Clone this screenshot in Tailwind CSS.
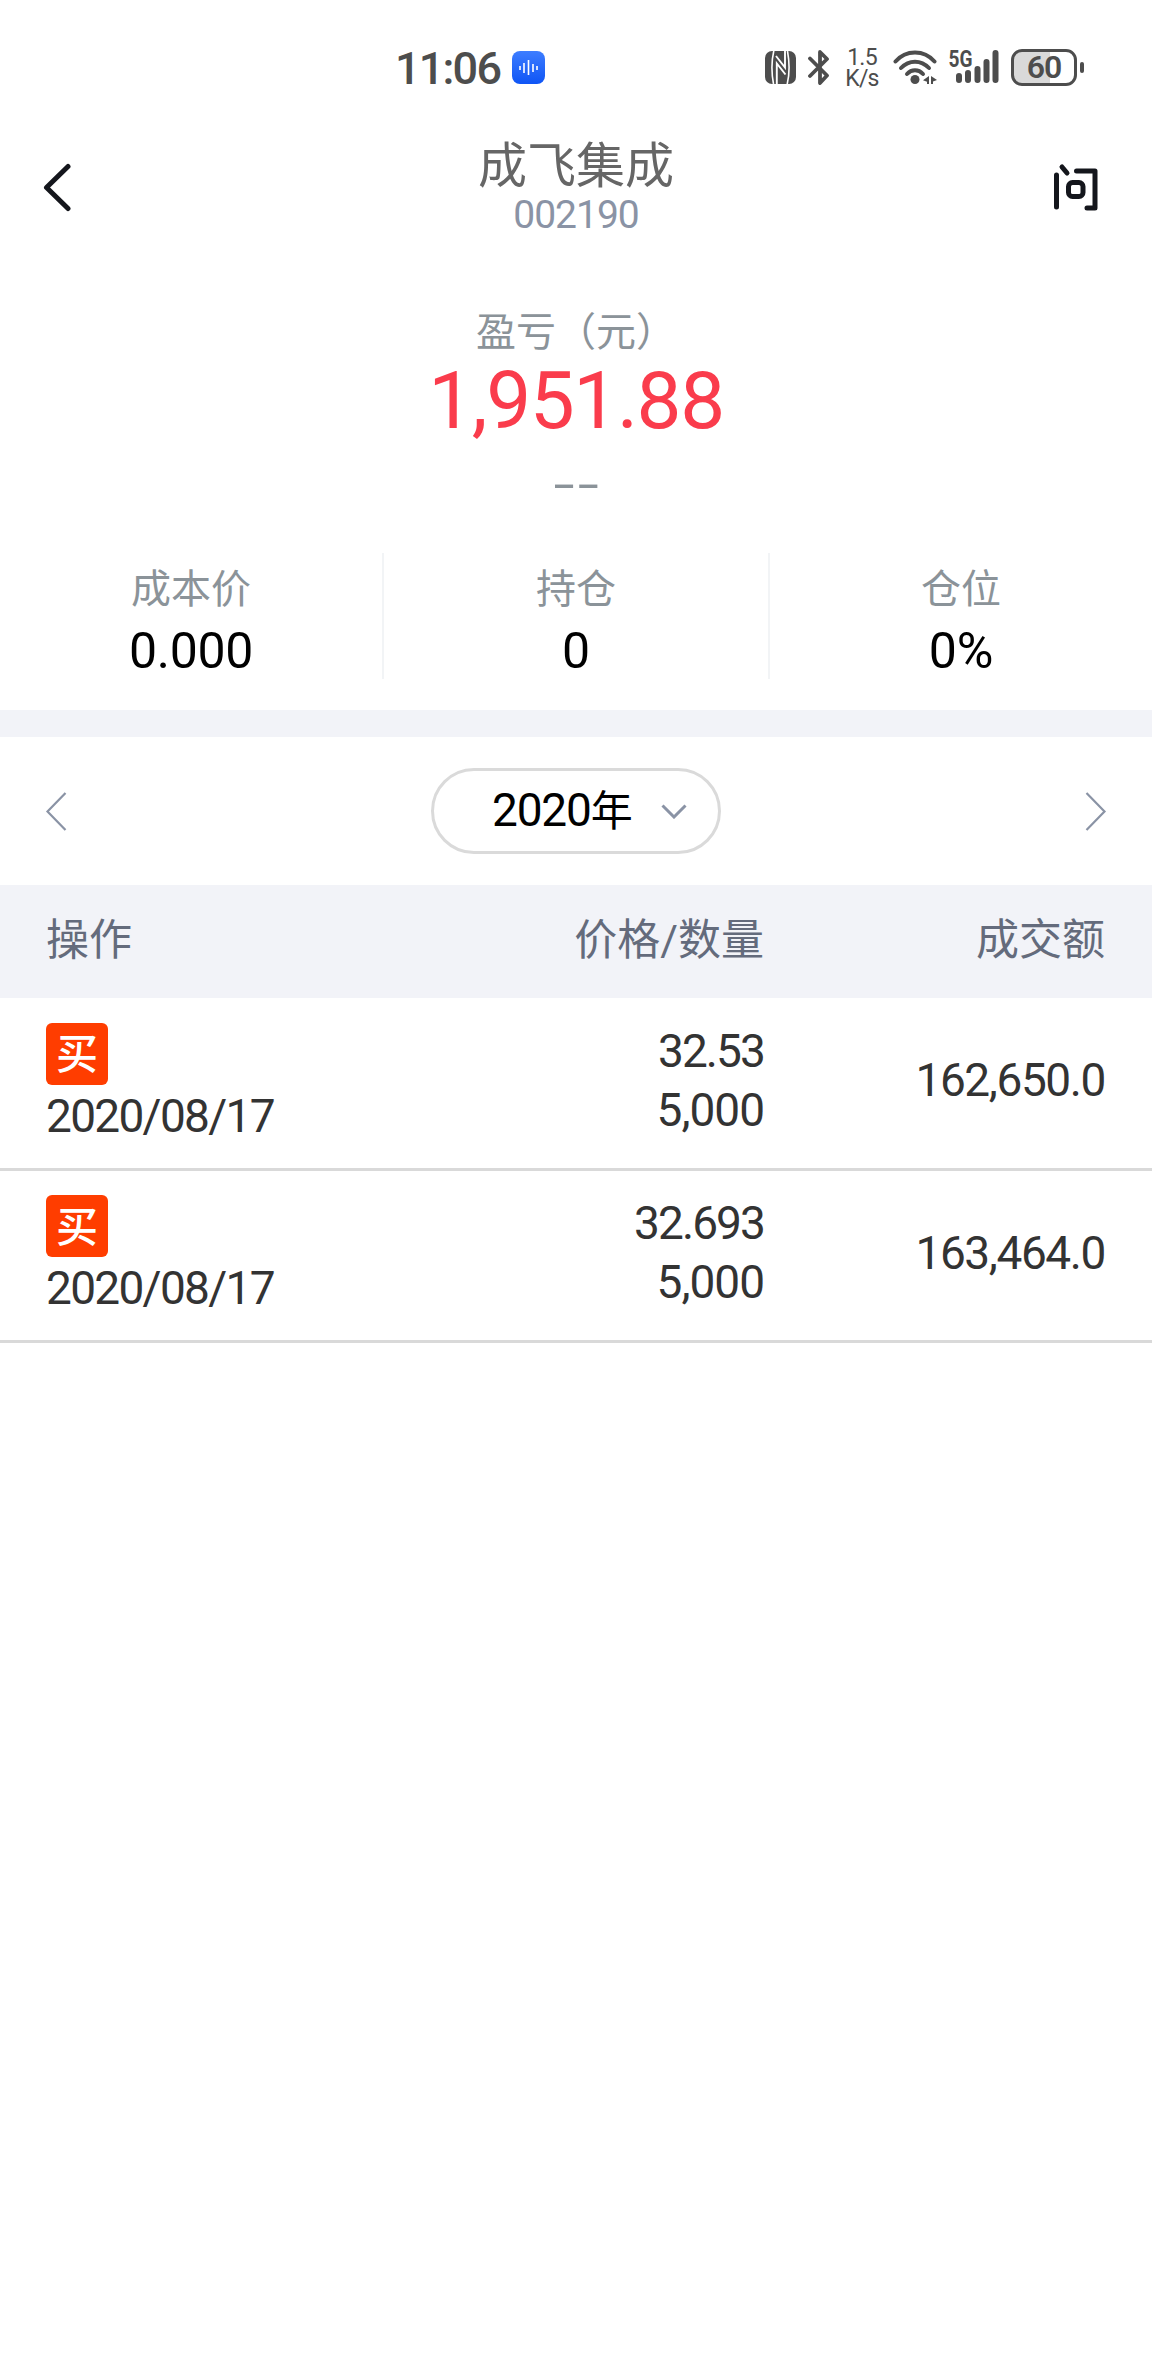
<!DOCTYPE html>
<html lang="zh-CN">
<head>
  <meta charset="UTF-8" />
  <meta name="viewport" content="width=device-width, initial-scale=1.0"/>
  <title>成飞集成 002190</title>
  <script src="https://cdn.jsdelivr.net/npm/@tailwindcss/browser@4"></script>
</head>
<body class="bg-white min-h-screen font-['Roboto','Noto_Sans_CJK_SC',sans-serif] text-black">

  <!-- STATUS BAR -->
  <div class="h-[134px] flex items-center justify-between pl-[395px] pr-[68px] text-[#4d4d4d]">
    <div class="flex items-center">
      <span class="w-[117px] pt-[4px] text-[45px] leading-[48px] font-medium tracking-[-1.800px] whitespace-nowrap">11:06</span>
      <svg class="w-[33px] h-[33px]" viewBox="0 0 33 33">
        <defs>
          <linearGradient id="voice" x1="0" y1="0" x2="0" y2="1">
            <stop offset="0" stop-color="#3d7dff"/>
            <stop offset="1" stop-color="#0f55f5"/>
          </linearGradient>
        </defs>
        <rect width="33" height="33" rx="8" fill="url(#voice)"/>
        <path d="M8 15v4M12 12v10M16.5 9v15M21 13v8M25 15v4" stroke="#fff" stroke-width="1.6" fill="none"/>
      </svg>
    </div>

    <div class="flex items-center">
      <!-- NFC -->
      <svg class="mr-px w-[31px] h-[33px]" viewBox="0 0 31 33">
        <rect width="31" height="33" rx="7" fill="#4d4d4d"/>
        <path d="M9 -1C6.500 9 6.500 22 8.500 33M22.500 0C24.500 11 24.500 24 22 34" stroke="#fff" stroke-width="1.600" fill="none"/>
        <path d="M11.800 33V12.500L20.500 23.500M20 0v16.500L11 5" stroke="#fff" stroke-width="1.900" fill="none"/>
      </svg>
      <!-- Bluetooth -->
      <svg class="ml-[11px] w-[22px] h-[35px]" viewBox="0 0 22 35" fill="none" stroke="#4d4d4d" stroke-width="3.800" stroke-linecap="round" stroke-linejoin="round">
        <path d="M2 8.500L19 25.500L12 33V2L19 9L2 26"/>
      </svg>
      <div class="ml-[14px] w-[36px] pt-[2px] flex flex-col items-center text-[23px] leading-[21px] tracking-[-0.800px] whitespace-nowrap">
        <span>1.5</span>
        <span>K/s</span>
      </div>
      <!-- Wi-Fi -->
      <svg class="ml-[13px] w-[45px] h-[35px]" viewBox="0 0 45 35">
        <g fill="none" stroke="#4d4d4d" stroke-width="4" stroke-linecap="round">
          <path d="M2.500 11.500C13 -.5 31 -.5 41.500 11.500"/>
          <path d="M8 18C16 9.500 28 9.500 36 18"/>
          <path d="M14 24C18.500 19 25.500 19 30 24"/>
        </g>
        <circle cx="22" cy="29.500" r="4.500" fill="#4d4d4d"/>
        <path d="M36 26v8h-2v-2.200l-4-1.600zM38 26l6 4l-4 1.500V34h-2z" fill="#4d4d4d"/>
      </svg>
      <!-- Signal -->
      <svg class="ml-[11px] w-[51px] h-[36px] overflow-visible" viewBox="0 0 51 36">
        <text x="-.5" y="17.500" font-family="Roboto" font-weight="700" font-size="23" textLength="24" lengthAdjust="spacingAndGlyphs" fill="#4d4d4d">5G</text>
        <path d="M10 27v4M19 24v7M28.500 20v11M37.500 13v18M46.500 4v27" stroke="#4d4d4d" stroke-width="6" stroke-linecap="round"/>
      </svg>
      <!-- Battery -->
      <div class="ml-[11px] w-[66px] h-[37px] rounded-[11px] border-3 border-[#4d4d4d] bg-linear-to-r from-[#d9d9d9] from-60% to-white to-60% flex items-center justify-center text-[32px] leading-[30px] font-semibold tracking-[-1px]">60</div>
      <div class="ml-[3px] w-[4px] h-[11px] rounded-[2px] bg-[#4d4d4d]"></div>
    </div>
  </div>

  <!-- TITLE BAR -->
  <header class="h-[107px] px-[42px] grid grid-cols-[1fr_auto_1fr] items-center">
    <svg class="w-[46px] h-[50px]" viewBox="0 0 46 50" fill="none" stroke="#14161c" stroke-width="5" stroke-linecap="round" stroke-linejoin="round">
      <path d="M26 3.500L4.500 24.500L26 45.500"/>
    </svg>
    <div class="self-start pt-[2px] flex flex-col items-center">
      <h1 class="h-[58px] pt-[2px] text-[49px] leading-[57px] text-[#666666]">成飞集成</h1>
      <p class="text-[39px] leading-[42px] tracking-[-1px] text-[#8a93a5]">002190</p>
    </div>
    <svg class="justify-self-end mr-[12px] w-[46px] h-[50px]" viewBox="0 0 46 50" fill="none" stroke="#14161c" stroke-width="5" stroke-linecap="round" stroke-linejoin="round">
      <path d="M4.500 12v32M10 4l5 6M24.500 8h18.500v37h-8"/>
      <rect x="16.500" y="19.500" width="14.500" height="14" rx="4"/>
    </svg>
  </header>

  <!-- PROFIT -->
  <section class="pt-[66px] flex flex-col items-center">
    <p class="text-[40px] leading-[52px] text-[#8b9399]">盈亏（元）</p>
    <p class="pt-[2px] text-[80px] leading-[80px] tracking-[-1.400px] text-[#fa3c4c]">1,951.88</p>
    <p class="mt-[18px] text-[44px] leading-[44px] text-[#8b9399] font-['Noto_Sans'] scale-x-[1.7]">--</p>
  </section>

  <section class="mt-[50px] pb-[31px] grid grid-cols-3 text-center">
    <div class="h-[126px] pt-[12px] border-r-2 border-[#f2f4f6]">
      <p class="text-[40px] leading-[50px] text-[#8b9399]">成本价</p>
      <p class="text-[50px] leading-[72px] tracking-[-0.300px]">0.000</p>
    </div>
    <div class="h-[126px] pt-[12px]">
      <p class="text-[40px] leading-[50px] text-[#8b9399]">持仓</p>
      <p class="text-[50px] leading-[72px]">0</p>
    </div>
    <div class="h-[126px] pt-[12px] border-l-2 border-[#f2f4f6]">
      <p class="text-[40px] leading-[50px] text-[#8b9399]">仓位</p>
      <p class="text-[50px] leading-[72px]">0%</p>
    </div>
  </section>

  <div class="h-[27px] bg-[#f2f3f8]"></div>

  <!-- YEAR PICKER -->
  <div class="h-[148px] flex items-center justify-between px-[45px]">
    <svg class="w-[22px] h-[40px]" viewBox="0 0 22 40" fill="none" stroke="#8a93a5" stroke-width="2.200">
      <path d="M20.500 2L2.500 20.500L20.500 39"/>
    </svg>
    <button class="w-[290px] h-[86px] pl-[58px] pr-[31px] flex items-center justify-between rounded-full border-3 border-[#dadada]">
      <span class="flex items-baseline leading-[50px]"><span class="text-[46px] tracking-[-1.200px]">2020</span><span class="text-[42px]">年</span></span>
      <svg class="w-[26px] h-[15px]" viewBox="0 0 26 15" fill="none" stroke="#8a93a5" stroke-width="3">
        <path d="M1.500 1.500L13 13L24.500 1.500"/>
      </svg>
    </button>
    <svg class="w-[22px] h-[40px]" viewBox="0 0 22 40" fill="none" stroke="#8a93a5" stroke-width="2.200">
      <path d="M1.500 2L19.500 20.500L1.500 39"/>
    </svg>
  </div>

  <!-- TRADE LIST -->
  <div class="h-[113px] pb-[2px] pl-[46px] pr-[47px] grid grid-cols-[300px_418px_341px] items-center bg-[#f2f3f8] text-[43px] text-[#646b7c]">
    <span>操作</span>
    <span class="text-right">价格/数量</span>
    <span class="text-right">成交额</span>
  </div>

  <div class="h-[173px] pb-[5px] pl-[46px] pr-[47px] grid grid-cols-[300px_418px_341px] items-center border-b-3 border-[#d9d9d9] text-[46px] tracking-[-1.400px] text-[#333333]">
    <div>
      <div class="w-[62px] h-[62px] pt-[2px] rounded-[6px] bg-[#ff3d00] flex items-center justify-center text-[42px] font-medium tracking-normal text-white">买</div>
      <p class="mt-[8px] leading-[46px] tracking-[-1.700px]">2020/08/17</p>
    </div>
    <div class="text-right leading-[59px]">
      <p class="tracking-[-1.900px]">32.53</p>
      <p class="tracking-[-1px]">5,000</p>
    </div>
    <p class="text-right">162,650.0</p>
  </div>

  <div class="h-[172px] pb-[5px] pl-[46px] pr-[47px] grid grid-cols-[300px_418px_341px] items-center border-b-3 border-[#d9d9d9] text-[46px] tracking-[-1.400px] text-[#333333]">
    <div>
      <div class="w-[62px] h-[62px] pt-[2px] rounded-[6px] bg-[#ff3d00] flex items-center justify-center text-[42px] font-medium tracking-normal text-white">买</div>
      <p class="mt-[8px] leading-[46px] tracking-[-1.700px]">2020/08/17</p>
    </div>
    <div class="text-right leading-[59px]">
      <p class="tracking-[-1.900px]">32.693</p>
      <p class="tracking-[-1px]">5,000</p>
    </div>
    <p class="text-right">163,464.0</p>
  </div>

</body>
</html>
